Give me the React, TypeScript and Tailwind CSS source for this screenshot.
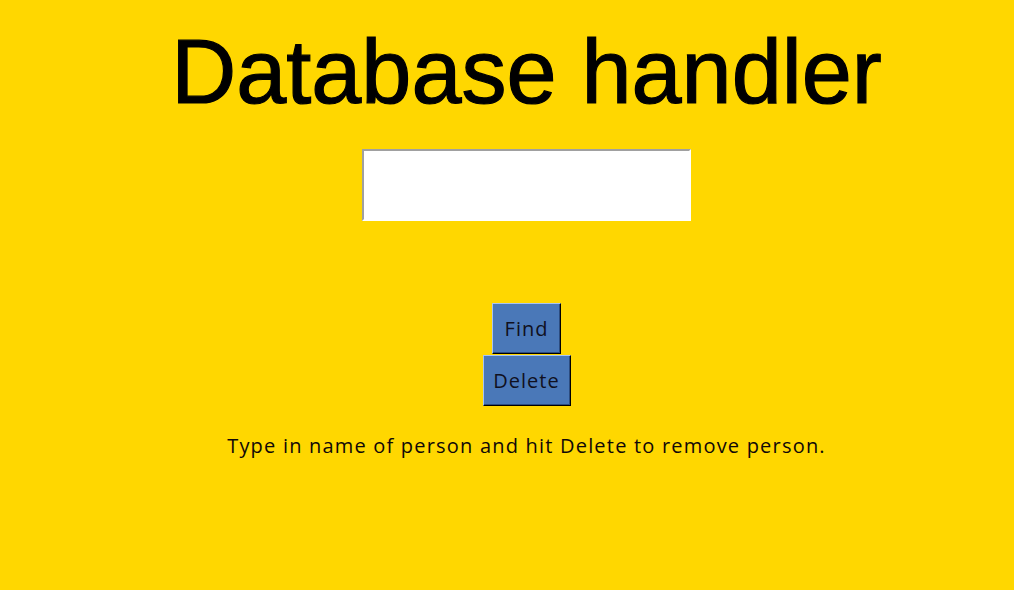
export default function App() {
  return (
    <div className="w-[1014px] h-[590px] bg-[#ffd700] overflow-hidden">
      <div className="pl-[39px] flex flex-col items-center">
        <h1 className="mt-[27px] text-[90px] leading-[90px] text-black font-['Liberation_Sans',Arial,sans-serif] [-webkit-text-stroke:1.2px_black]">
          Database handler
        </h1>

        <input
          type="text"
          className="mt-[32px] w-[329px] h-[72px] bg-white border-2 border-t-[#a0a0a0] border-l-[#a0a0a0] border-r-white border-b-white outline-none px-1"
        />

        <div className="mt-[82px] flex flex-col items-center font-['Open_Sans',sans-serif] font-medium text-[20px] tracking-[1px] text-[#101020]">
          <button className="w-[69px] h-[51px] bg-[#4a78b8] border border-t-[#a8c4f2] border-l-[#a8c4f2] border-r-black border-b-black shadow-[inset_-1px_-1px_0_#2c4c80]">
            Find
          </button>
          <button className="mt-[1px] w-[88px] h-[51px] bg-[#4a78b8] border border-t-[#a8c4f2] border-l-[#a8c4f2] border-r-black border-b-black shadow-[inset_-1px_-1px_0_#2c4c80]">
            Delete
          </button>
        </div>

        <p className="mt-[26px] font-['Open_Sans',sans-serif] font-medium text-[20px] leading-[28px] tracking-[1.2px] text-[#100808]">
          Type in name of person and hit Delete to remove person.
        </p>
      </div>
    </div>
  );
}
